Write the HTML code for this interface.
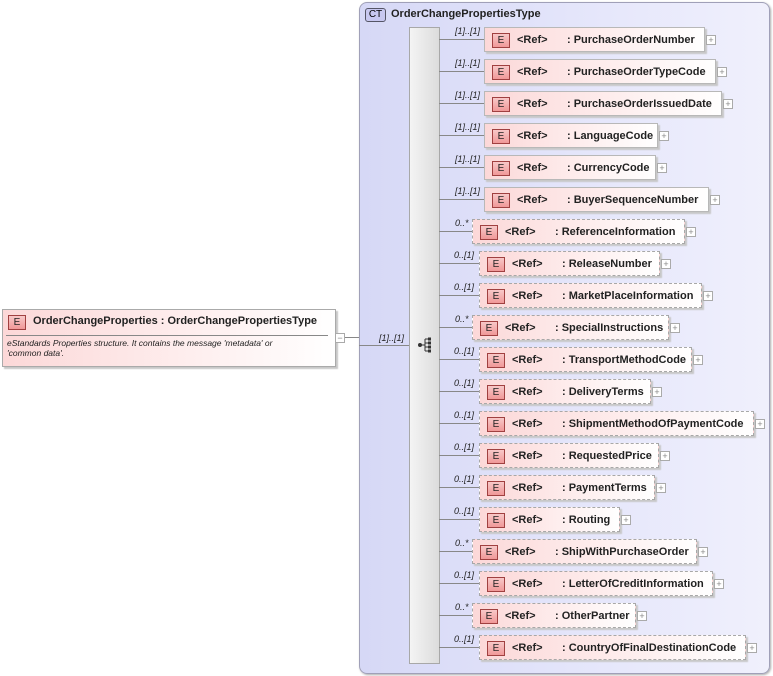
<!DOCTYPE html>
<html><head><meta charset="utf-8"><style>
body{margin:0;width:773px;height:676px;background:#fff;position:relative;overflow:hidden;font-family:"Liberation Sans",Arial,sans-serif}
.a{position:absolute}
.ct{left:359px;top:2px;width:409px;height:670px;border:1px solid #a0a0b8;border-radius:8px;background:linear-gradient(90deg,#d6d8f6,#e6e7fb 60%,#f0f0fc);box-shadow:1px 1px 2px #aaa}
.seq{left:409px;top:27px;width:29px;height:635px;background:linear-gradient(90deg,#f4f4f4,#dcdcdc);border:1px solid #a8a8a8}
.box{position:absolute;height:23px;background:linear-gradient(90deg,#fcd8d8,#fff);border:1px solid #b8b8b8;box-shadow:2px 2px 1px #c8c8c8;font-size:11px;font-weight:bold;color:#222;white-space:nowrap}
.opt{border:1px dashed #a8a8a8}
.E{position:absolute;left:7px;top:5px;width:16px;height:13px;border:1px solid #a04040;background:linear-gradient(#f8c8c8,#f09898);font-size:10px;font-weight:normal;text-align:center;line-height:13px;color:#222}
.ref{position:absolute;left:32px;top:6px}
.nm{position:absolute;top:6px}
.pl{position:absolute;width:8px;height:8px;border:1px solid #aaa;background:#fff;font-size:9px;line-height:8px;text-align:center;color:#888}
.ln{position:absolute;height:1px;background:#888}
.lb{position:absolute;font-size:9px;font-style:italic;color:#222}
</style></head><body>
<div class="a ct"></div>
<div class="a" style="left:365px;top:8px;width:19px;height:12px;border:1px solid #556;border-radius:3px;background:#c8c8f0;font-size:10px;text-align:center;line-height:12px">CT</div>
<div class="a" style="left:391px;top:8px;font-size:11px;font-weight:bold;color:#222">OrderChangePropertiesType</div>
<div class="a seq"></div>
<svg class="a" style="left:416px;top:336px" width="18" height="18"><circle cx="4" cy="9" r="2" fill="#333"/><path d="M4 9H9M9 3V15M9 3H12M9 7H12M9 11H12M9 15H12" stroke="#333" fill="none"/><rect x="12" y="1.5" width="3" height="3" fill="#333"/><rect x="12" y="5.5" width="3" height="3" fill="#333"/><rect x="12" y="9.5" width="3" height="3" fill="#333"/><rect x="12" y="13.5" width="3" height="3" fill="#333"/></svg>
<div class="a" style="left:2px;top:309px;width:332px;height:56px;border:1px solid #aaa;background:linear-gradient(90deg,#fcd8d8,#fff);box-shadow:2px 2px 1px #c8c8c8"></div>
<div class="E" style="left:8px;top:315px">E</div>
<div class="a" style="left:33px;top:315px;font-size:11px;font-weight:bold;color:#222">OrderChangeProperties : OrderChangePropertiesType</div>
<div class="a" style="left:6px;top:335px;width:322px;height:1px;background:#888"></div>
<div class="a" style="left:7px;top:338px;font-size:8.5px;font-style:italic;color:#222;line-height:10px">eStandards Properties structure. It contains the message 'metadata' or<br>'common data'.</div>
<div class="pl" style="left:335px;top:333px">−</div>
<div class="ln" style="left:345px;top:337px;width:14px"></div>
<div class="ln" style="left:359px;top:345px;width:50px"></div>
<div class="lb" style="left:379px;top:333px">[1]..[1]</div>
<div id="rows"></div>
<script>
var d=[["R","PurchaseOrderNumber",705],["R","PurchaseOrderTypeCode",716],["R","PurchaseOrderIssuedDate",722],["R","LanguageCode",658],["R","CurrencyCode",656],["R","BuyerSequenceNumber",709],["*","ReferenceInformation",685],["1","ReleaseNumber",660],["1","MarketPlaceInformation",702],["*","SpecialInstructions",669],["1","TransportMethodCode",692],["1","DeliveryTerms",651],["1","ShipmentMethodOfPaymentCode",754],["1","RequestedPrice",659],["1","PaymentTerms",655],["1","Routing",620],["*","ShipWithPurchaseOrder",697],["1","LetterOfCreditInformation",713],["*","OtherPartner",636],["1","CountryOfFinalDestinationCode",746]];
var h="";
d.forEach(function(r,i){var c=39+32*i,x=r[0]=="R"?484:r[0]=="1"?479:472,lab=r[0]=="R"?"[1]..[1]":r[0]=="1"?"0..[1]":"0..*";
h+='<div class="ln" style="left:439px;top:'+c+'px;width:'+(x-439)+'px"></div>';
h+='<div class="lb" style="left:'+(r[0]=="R"?455:r[0]=="1"?454:455)+'px;top:'+(c-13)+'px">'+lab+'</div>';
h+='<div class="box'+(r[0]=="R"?'':' opt')+'" style="left:'+x+'px;top:'+(c-12)+'px;width:'+(r[2]-x-2)+'px"><div class="E">E</div><span class="ref">&lt;Ref&gt;</span><span class="nm" style="left:82px">: '+r[1]+'</span></div>';
h+='<div class="pl" style="left:'+(r[2]+1)+'px;top:'+(c-4)+'px">+</div>';});
document.getElementById("rows").innerHTML=h;
</script>
</body></html>
